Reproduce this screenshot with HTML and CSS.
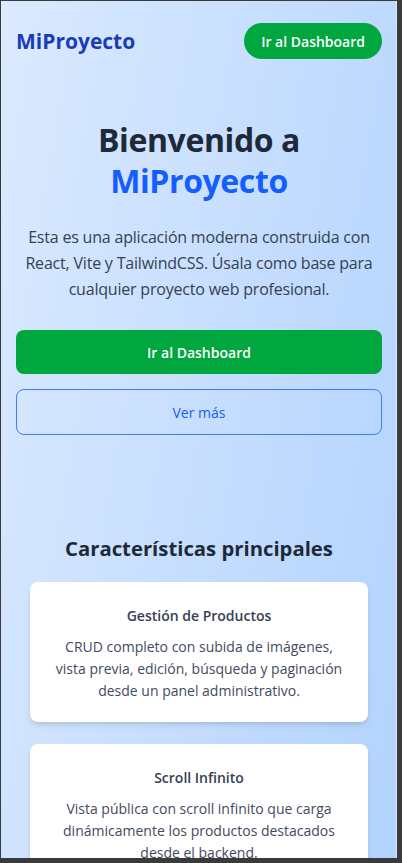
FILE: index.html
```html
<!DOCTYPE html>
<html lang="es">
<head>
<meta charset="utf-8">
<title>MiProyecto</title>
<link rel="stylesheet" href="styles.css">
</head>
<body>
<div class="frame">
  <div class="page">
    <header class="header">
      <span class="logo">MiProyecto</span>
      <a class="pill">Ir al Dashboard</a>
    </header>
    <section class="hero">
      <h1 class="title"><span class="title-line">Bienvenido a</span><span class="title-line accent">MiProyecto</span></h1>
      <p class="lead">Esta es una aplicación moderna construida con React, Vite y TailwindCSS. Úsala como base para cualquier proyecto web profesional.</p>
      <div class="actions">
        <a class="btn btn-primary">Ir al Dashboard</a>
        <a class="btn btn-outline">Ver más</a>
      </div>
    </section>
    <section class="features">
      <h2 class="features-title">Características principales</h2>
      <div class="cards">
        <div class="card">
          <h3 class="card-title">Gestión de Productos</h3>
          <p class="card-text">CRUD completo con subida de imágenes, vista previa, edición, búsqueda y paginación desde un panel administrativo.</p>
        </div>
        <div class="card">
          <h3 class="card-title">Scroll Infinito</h3>
          <p class="card-text">Vista pública con scroll infinito que carga dinámicamente los productos destacados desde el backend.</p>
        </div>
      </div>
    </section>
  </div>
</div>
</body>
</html>
```
FILE: styles.css
```css
* { box-sizing: border-box; }
html, body { margin: 0; padding: 0; }
body {
  background: #3a3a3a;
  font-family: "Open Sans", "Noto Sans", sans-serif;
  width: 402px;
  height: 863px;
  overflow: hidden;
}
.frame {
  margin: 1px 0 0 1px;
  width: 396px;
  height: 857px;
  overflow: hidden;
  background: linear-gradient(100deg, #dbeafe 0%, #c3dcfe 60%, #b2d3fe 100%);
  border-right: 1px solid #d8e8ff;
}
.page { padding: 0 14px 0 15px; }
.header {
  display: flex;
  justify-content: space-between;
  align-items: center;
  padding: 22px 0;
}
.logo {
  font-size: 21px;
  font-weight: 700;
  color: #193cb8;
}
.pill {
  display: inline-flex;
  align-items: center;
  height: 36px;
  padding: 0 17px;
  border-radius: 999px;
  background: #00a63e;
  color: #fff;
  font-size: 14px;
  font-weight: 600;
}
.hero { text-align: center; padding-top: 38px; }
.title {
  margin: 0;
  font-size: 32px;
  line-height: 41px;
  font-weight: 700;
  letter-spacing: -0.4px;
  color: #1e2939;
}
.title-line { display: block; }
.accent { color: #155dfc; }
.lead {
  margin: 23px 0 0;
  font-size: 16px;
  line-height: 26px;
  letter-spacing: -0.2px;
  color: #364153;
}
.actions {
  display: flex;
  flex-direction: column;
  gap: 15px;
  margin-top: 28px;
}
.btn {
  display: flex;
  align-items: center;
  justify-content: center;
  border-radius: 8px;
  font-size: 14px;
  font-weight: 600;
}
.btn-primary { height: 44px; background: #00a63e; color: #fff; }
.btn-outline { height: 46px; border: 1px solid #3f7cf7; color: #155dfc; font-weight: 500; }
.features { padding: 0 14px; margin-top: 97px; text-align: center; }
.features-title {
  margin: 0 0 18px;
  font-size: 20.3px;
  line-height: 32px;
  font-weight: 700;
  color: #1e2939;
}
.cards { display: flex; flex-direction: column; gap: 22px; }
.card {
  background: #fff;
  border-radius: 8px;
  box-shadow: 0 4px 6px -1px rgba(0,0,0,0.1), 0 2px 4px -2px rgba(0,0,0,0.1);
  padding: 22px 20px 20px;
}
.card-title {
  margin: 0 0 8px;
  font-size: 14px;
  line-height: 24px;
  font-weight: 600;
  color: #364153;
}
.card-text {
  margin: 0;
  font-size: 14px;
  line-height: 22px;
  color: #3f4b5e;
}
```
